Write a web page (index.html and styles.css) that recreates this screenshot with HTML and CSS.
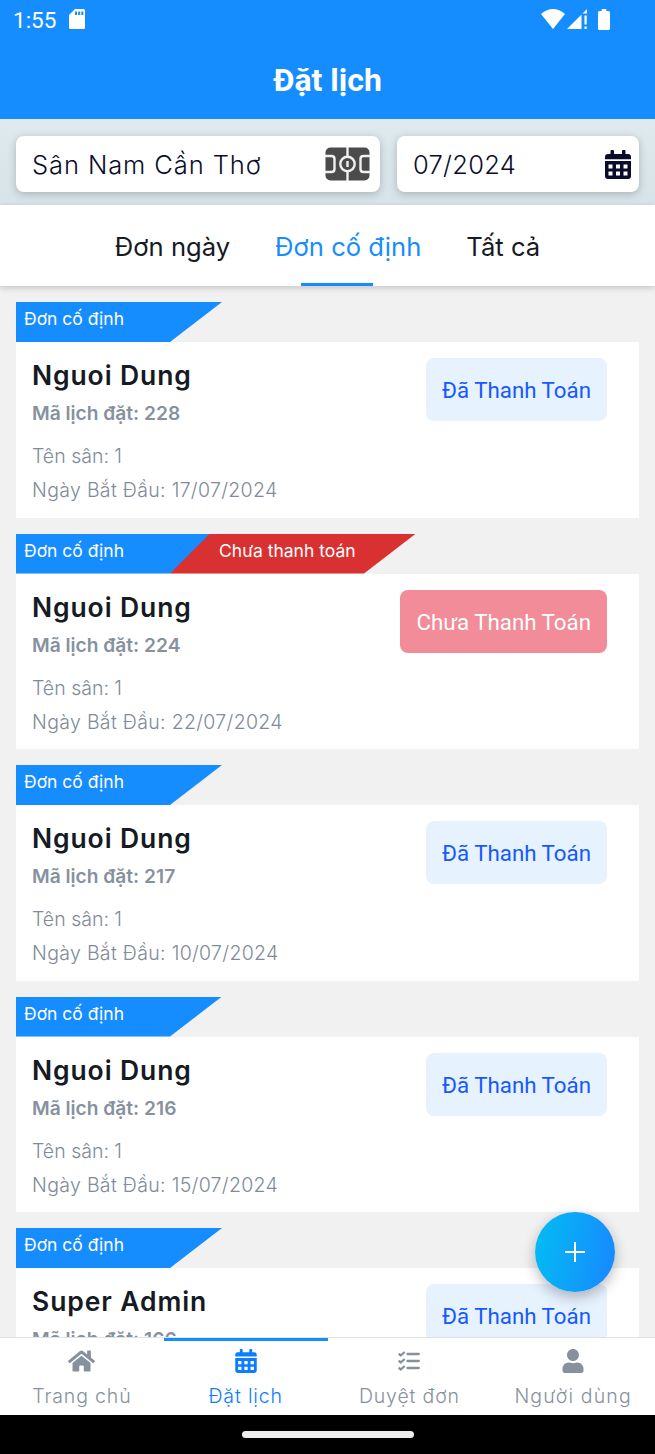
FILE: index.html
```html
<!DOCTYPE html>
<html lang="vi">
<head>
  <meta charset="UTF-8">
  <meta name="viewport" content="width=device-width, initial-scale=1.0">
  <title>Đặt lịch</title>
  <link rel="stylesheet" href="styles.css">
</head>
<body>
<div class="screen">

  <!-- Status bar + title -->
  <header class="header">
    <div class="status-bar">
      <span class="clock">1:55</span>
      <svg class="sd-icon" width="16" height="20" viewBox="0 0 16 20">
        <path fill="#fff" d="M6 0h8.500Q16 0 16 1.500v17Q16 20 14.500 20h-13Q0 20 0 18.500V6z"/>
        <path fill="#168dff" d="M6 2.500h2v3.500H6zM9.200 2.500h2v3.500h-2zM12.300 2.500h2v3.500h-2z"/>
      </svg>
      <div class="status-right">
        <svg width="24" height="20" viewBox="0 0 24 20"><path fill="#fff" d="M0 5Q12-5 24 5L12 20z"/></svg>
        <svg width="20" height="20" viewBox="0 0 20 20"><path fill="#fff" d="M0 20L14.500 5.500V20zM15.500 4.500L20 0v4.500zM17.500 6.500h2.200v9h-2.200zM17.500 17.500h2.200V20h-2.200z"/></svg>
        <svg class="battery" width="12" height="21" viewBox="0 0 13 21" preserveAspectRatio="none"><path fill="#fff" d="M4 0h5v2h2.500Q13 2 13 3.500v16Q13 21 11.500 21h-10Q0 21 0 19.500v-16Q0 2 1.500 2H4z"/></svg>
      </div>
    </div>
    <h1 class="title">Đặt lịch</h1>
  </header>

  <!-- Filters -->
  <div class="filters">
    <div class="field field-stadium">
      <span class="stadium-name">Sân Nam Cần Thơ</span>
      <svg width="45" height="34" viewBox="0 0 45 34">
        <rect x="0.500" y="0.500" width="44" height="33" rx="5" fill="#4b4b4b"/>
        <g fill="none" stroke="#f0f0f0" stroke-width="2.400">
          <path d="M22.500 0v10M22.500 24V34M22.500 14v6"/>
          <circle cx="22.500" cy="17" r="7.200"/>
          <path d="M0 9h6.500Q9.500 9 9.500 12v10Q9.500 25 6.500 25H0M45 9h-6.500Q35.500 9 35.500 12v10Q35.500 25 38.500 25H45"/>
        </g>
      </svg>
    </div>
    <div class="field field-month">
      <span class="month">07/2024</span>
      <svg width="26" height="29" viewBox="0 0 26 29"><path fill="#0b0c2a" fill-rule="evenodd" d="M5.500 4V1.500a1.500 1.500 0 0 1 3.500 0V4h8V1.500a1.500 1.500 0 0 1 3.500 0V4H23a3 3 0 0 1 3 3v2.200H0V7a3 3 0 0 1 3-3zM0 11h26v15a3 3 0 0 1-3 3H3a3 3 0 0 1-3-3zM3.500 14.500v4h4v-4zM11 14.500v4h4v-4zM18.500 14.500v4h4v-4zM3.500 21.500v4h4v-4zM11 21.500v4h4v-4zM18.500 21.500v4h4v-4z"/></svg>
    </div>
  </div>

  <nav class="tabs">
    <span class="tab">Đơn ngày</span>
    <span class="tab active">Đơn cố định</span>
    <span class="tab">Tất cả</span>
  </nav>

  <!-- Bookings -->
  <main class="list">
    <article class="booking">
      <div class="tags"><span class="tag">Đơn cố định</span></div>
      <div class="card">
        <div class="info">
          <h2 class="name">Nguoi Dung</h2>
          <p class="code">Mã lịch đặt: 228</p>
          <p class="line court">Tên sân: 1</p>
          <p class="line">Ngày Bắt Đầu: 17/07/2024</p>
        </div>
        <span class="badge paid">Đã Thanh Toán</span>
      </div>
    </article>

    <article class="booking">
      <div class="tags"><span class="tag">Đơn cố định</span><span class="tag tag-unpaid">Chưa thanh toán</span></div>
      <div class="card">
        <div class="info">
          <h2 class="name">Nguoi Dung</h2>
          <p class="code">Mã lịch đặt: 224</p>
          <p class="line court">Tên sân: 1</p>
          <p class="line">Ngày Bắt Đầu: 22/07/2024</p>
        </div>
        <span class="badge unpaid">Chưa Thanh Toán</span>
      </div>
    </article>

    <article class="booking">
      <div class="tags"><span class="tag">Đơn cố định</span></div>
      <div class="card">
        <div class="info">
          <h2 class="name">Nguoi Dung</h2>
          <p class="code">Mã lịch đặt: 217</p>
          <p class="line court">Tên sân: 1</p>
          <p class="line">Ngày Bắt Đầu: 10/07/2024</p>
        </div>
        <span class="badge paid">Đã Thanh Toán</span>
      </div>
    </article>

    <article class="booking">
      <div class="tags"><span class="tag">Đơn cố định</span></div>
      <div class="card">
        <div class="info">
          <h2 class="name">Nguoi Dung</h2>
          <p class="code">Mã lịch đặt: 216</p>
          <p class="line court">Tên sân: 1</p>
          <p class="line">Ngày Bắt Đầu: 15/07/2024</p>
        </div>
        <span class="badge paid">Đã Thanh Toán</span>
      </div>
    </article>

    <article class="booking">
      <div class="tags"><span class="tag">Đơn cố định</span></div>
      <div class="card">
        <div class="info">
          <h2 class="name">Super Admin</h2>
          <p class="code">Mã lịch đặt: 166</p>
        </div>
        <span class="badge paid">Đã Thanh Toán</span>
      </div>
    </article>
  </main>

  <button class="fab" aria-label="Thêm">
    <svg width="20" height="20" viewBox="0 0 20 20"><path d="M10 0v20M0 10h20" stroke="#fff" stroke-width="2"/></svg>
  </button>

  <footer class="bottom-nav">
    <div class="nav-item">
      <svg width="27" height="24" viewBox="0 0 576 512"><path fill="#87919e" d="M280.400 148.300L96 300.100V464a16 16 0 0 0 16 16l112.100-.300a16 16 0 0 0 15.900-16V368a16 16 0 0 1 16-16h64a16 16 0 0 1 16 16v95.600a16 16 0 0 0 16 16.100L464 480a16 16 0 0 0 16-16V300L295.700 148.300a12.200 12.200 0 0 0-15.300 0zM571.600 251.500L488 182.600V44a12 12 0 0 0-12-12h-56a12 12 0 0 0-12 12v72.600L318.500 43a48 48 0 0 0-61 0L4.300 251.500a12 12 0 0 0-1.600 16.900l25.500 31a12 12 0 0 0 16.900 1.600L280.400 107.200a12.200 12.200 0 0 1 15.300 0L531 301a12 12 0 0 0 16.900-1.600l25.500-31a12 12 0 0 0-1.800-16.900z"/></svg>
      <span class="nav-label">Trang chủ</span>
    </div>
    <div class="nav-item active">
      <svg width="22" height="24" viewBox="0 0 26 29"><path fill="#0d7dff" fill-rule="evenodd" d="M5.500 4V1.500a1.500 1.500 0 0 1 3.500 0V4h8V1.500a1.500 1.500 0 0 1 3.500 0V4H23a3 3 0 0 1 3 3v2.200H0V7a3 3 0 0 1 3-3zM0 11h26v15a3 3 0 0 1-3 3H3a3 3 0 0 1-3-3zM3.500 14.500v4h4v-4zM11 14.500v4h4v-4zM18.500 14.500v4h4v-4zM3.500 21.500v4h4v-4zM11 21.500v4h4v-4zM18.500 21.500v4h4v-4z"/></svg>
      <span class="nav-label">Đặt lịch</span>
    </div>
    <div class="nav-item">
      <svg width="22" height="24" viewBox="0 0 22 24">
        <path fill="none" stroke="#87919e" stroke-width="2.300" stroke-linecap="round" d="M9.500 5H20.800M9.500 12H20.800M9.500 19H20.800"/>
        <path fill="none" stroke="#87919e" stroke-width="2.300" d="M.7 4.500l2 2L6.700 3M.7 11.500l2 2L6.700 10M.7 18.500l2 2L6.700 17"/>
      </svg>
      <span class="nav-label">Duyệt đơn</span>
    </div>
    <div class="nav-item">
      <svg width="22" height="24" viewBox="0 0 448 512"><path fill="#87919e" d="M224 256c70.700 0 128-57.300 128-128S294.700 0 224 0 96 57.300 96 128s57.300 128 128 128zm89.600 32h-16.700c-22.200 10.200-46.900 16-72.900 16s-50.600-5.800-72.900-16h-16.700C60.200 288 0 348.200 0 422.400V464c0 26.500 21.500 48 48 48h352c26.500 0 48-21.500 48-48v-41.600c0-74.200-60.200-134.400-134.400-134.400z"/></svg>
      <span class="nav-label nav-user">Người dùng</span>
    </div>
  </footer>

  <div class="gesture-bar"><div class="gesture-pill"></div></div>
</div>
</body>
</html>
```
FILE: styles.css
```css
* {
  box-sizing: border-box;
}

body {
  margin: 0;
  font-family: 'Inter', 'Noto Sans', sans-serif;
  background: #f1f1f1;
}

h1, h2, p {
  margin: 0;
}

svg {
  display: block;
  flex-shrink: 0;
}

.screen {
  display: flex;
  flex-direction: column;
  width: 655px;
  height: 1454px;
  overflow: hidden;
  position: relative;
}

/* Header */
.header {
  height: 119px;
  background: #168dff;
  color: white;
  font-family: 'Roboto', sans-serif;
  flex-shrink: 0;
}

.status-bar {
  display: flex;
  align-items: center;
  height: 40px;
  padding: 0 45px 2px 13px;
}

.clock {
  font-size: 22.500px;
  width: 56px;
  padding-top: 2px;
}

.status-right {
  display: flex;
  gap: 2px;
  margin-left: auto;
}

.battery {
  margin-left: 9px;
}

.title {
  font-size: 32px;
  font-weight: 700;
  line-height: 40px;
  padding-top: 20px;
  text-align: center;
}

/* Filters */
.filters {
  display: flex;
  gap: 17px;
  height: 86px;
  padding: 17px 16px 13px;
  background: linear-gradient(#deeaed, #d7e3e8);
  flex-shrink: 0;
}

.field {
  display: flex;
  align-items: center;
  justify-content: space-between;
  height: 56px;
  background: white;
  border-radius: 8px;
  color: #0b0c2a;
  font-size: 25.500px;
  font-weight: 300;
  box-shadow: 0 2px 9px rgba(0,0,0,0.22);
}

.field-stadium {
  width: 364px;
  padding: 0 10px 0 16px;
}

.field-month {
  width: 242px;
  padding: 0 8px 0 16px;
}

.stadium-name {
  letter-spacing: 0.900px;
}

.month {
  letter-spacing: 0.300px;
}

/* Tabs */
.tabs {
  display: flex;
  justify-content: center;
  gap: 45px;
  height: 81px;
  background: white;
  box-shadow: 0 2px 6px rgba(0,0,0,0.18);
  z-index: 1;
  flex-shrink: 0;
}

.tab {
  font-size: 25.600px;
  line-height: 83px;
  color: #151a23;
  position: relative;
}

.tab.active {
  color: #168dff;
}

.tab.active::after {
  content: '';
  position: absolute;
  left: 26px;
  bottom: 0;
  width: 72px;
  height: 3px;
  background: #168dff;
}

/* Booking list */
.list {
  display: flex;
  flex-direction: column;
  gap: 16px;
  flex: 1;
  min-height: 0;
  padding: 16px 16px 0;
  overflow: hidden;
}

.booking {
  flex-shrink: 0;
}

.tags {
  display: flex;
  height: 40px;
}

.tag {
  width: 206px;
  padding: 5px 0 0 8px;
  background: #168dff;
  color: white;
  font-size: 17.500px;
  line-height: 24px;
  clip-path: polygon(0 0, 100% 0, 154px 100%, 0 100%);
}

.tag-unpaid {
  width: 246px;
  margin-left: -52px;
  padding-left: 49px;
  background: #d93131;
  clip-path: polygon(40px 0, 100% 0, 194px 100%, 0 100%);
}

.card {
  display: flex;
  justify-content: space-between;
  align-items: flex-start;
  height: 175.500px;
  padding: 16px 32px 0 16px;
  background: white;
}

.name {
  font-size: 26.500px;
  font-weight: 600;
  line-height: 34px;
  letter-spacing: 0.900px;
  color: #151a23;
}

.code {
  margin-top: 4px;
  font-size: 19.200px;
  font-weight: 600;
  line-height: 34px;
  color: #87919e;
}

.line {
  font-size: 19.500px;
  font-weight: 300;
  line-height: 34px;
  letter-spacing: 0.320px;
  color: #7f8b99;
}

.court {
  margin-top: 9px;
  letter-spacing: 0;
}

.badge {
  padding: 1px 16px 0;
  border-radius: 8px;
  font-family: 'Roboto', sans-serif;
  font-size: 22.300px;
  line-height: 62px;
}

.paid {
  background: #e7f2ff;
  color: #1659ff;
}

.unpaid {
  background: #f18c98;
  color: white;
}

/* Floating add button */
.fab {
  position: absolute;
  left: 535px;
  top: 1212px;
  display: flex;
  align-items: center;
  justify-content: center;
  width: 80px;
  height: 80px;
  padding: 0;
  border: none;
  border-radius: 50%;
  background: linear-gradient(100deg, #02bdf2, #168dff 90%);
  box-shadow: 0 5px 14px rgba(0,0,0,0.28);
}

/* Bottom navigation */
.bottom-nav {
  display: flex;
  height: 78px;
  background: white;
  border-top: 1px solid #e2e2e2;
  flex-shrink: 0;
  z-index: 2;
}

.nav-item {
  display: flex;
  flex: 1;
  flex-direction: column;
  align-items: center;
  gap: 8px;
  padding-top: 8px;
  border-top: 3px solid transparent;
  color: #87919e;
  font-size: 19.500px;
  font-weight: 300;
  line-height: 30px;
}

.nav-item.active {
  border-top-color: #168dff;
  color: #0d7dff;
}

.nav-label {
  letter-spacing: 0.850px;
}

.nav-user {
  letter-spacing: 1.150px;
}

.gesture-bar {
  display: flex;
  align-items: center;
  justify-content: center;
  height: 39px;
  background: black;
  flex-shrink: 0;
}

.gesture-pill {
  width: 172px;
  height: 7px;
  border-radius: 4px;
  background: #ececec;
}
```
